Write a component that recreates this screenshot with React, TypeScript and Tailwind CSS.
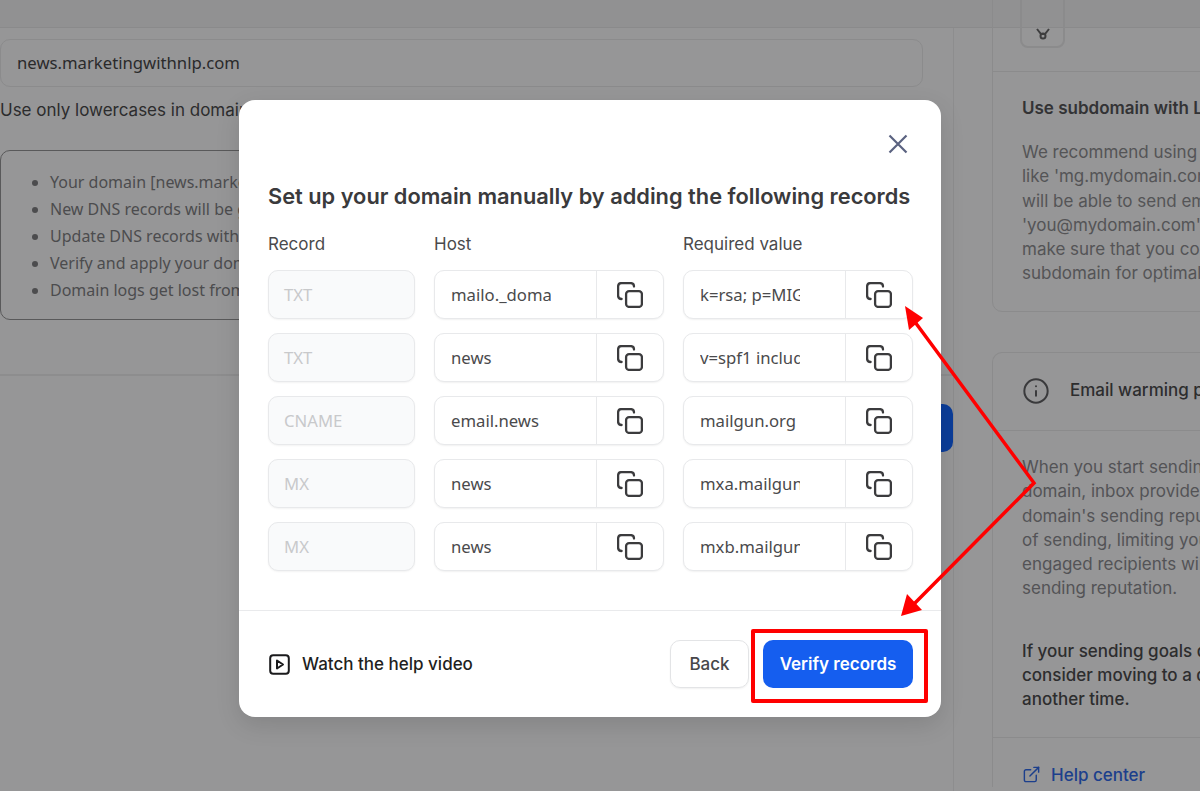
import { ReactNode } from "react"
import { Info, ExternalLink } from "lucide-react"

interface DnsRecord {
  type: string
  host: string
  value: string
}

const records: DnsRecord[] = [
  { type: "TXT", host: "mailo._domainkey.news", value: "k=rsa; p=MIGfMA0GCSq" },
  { type: "TXT", host: "news", value: "v=spf1 include:mailgun.org" },
  { type: "CNAME", host: "email.news", value: "mailgun.org" },
  { type: "MX", host: "news", value: "mxa.mailgun.org" },
  { type: "MX", host: "news", value: "mxb.mailgun.org" },
]

const notes = [
  "Your domain [news.marketingwithnlp.com] will be connected",
  "New DNS records will be generated for this domain",
  "Update DNS records with your domain provider",
  "Verify and apply your domain settings",
  "Domain logs get lost from the previous setup",
]

function CopyIcon() {
  return (
    <svg width="26" height="26" viewBox="0 0 26 26" fill="none" stroke="#3b3b3d" strokeWidth="2.3" strokeLinecap="round" strokeLinejoin="round">
      <rect x="9.1" y="9.1" width="15.8" height="15.8" rx="3" />
      <path d="M4.6 17 C2.6 17 1.1 15.6 1.1 13.6 V4.6 C1.1 2.6 2.6 1.1 4.6 1.1 H13.6 C15.6 1.1 17 2.6 17 4.6" />
    </svg>
  )
}

function CopyField({ text }: { text: string }) {
  return (
    <div className="flex h-[49px] w-[230px] rounded-[10px] border border-[#e8e9eb] bg-white shadow-[0_1px_2px_rgba(0,0,0,0.06)]">
      <div className="flex min-w-0 flex-1 items-center pl-4 pr-[45px]">
        <span className="block w-full overflow-hidden whitespace-nowrap font-['Noto_Sans',sans-serif] text-[16.7px] text-[#4a4a4c]">{text}</span>
      </div>
      <div className="flex w-[67px] shrink-0 items-center justify-center border-l border-[#e8e9eb] pr-[1px]">
        <CopyIcon />
      </div>
    </div>
  )
}

function SideLine({ children }: { children: ReactNode }) {
  return <p className="h-[24.3px] whitespace-nowrap leading-[24.3px]">{children}</p>
}

function Background() {
  return (
    <div className="flex h-full w-full flex-col overflow-hidden bg-[#969697] text-[17px] text-[#2c2c2d]">
      <div className="h-[28px] shrink-0 border-b border-[#8a8a8b] bg-[#919192]" />
      <div className="flex min-h-0 flex-1">
        {/* left column */}
        <div className="relative w-[954px] shrink-0 border-r border-[#8d8d8e]">
          <div className="h-[348px] border-b-2 border-[#8d8d8e] pr-[30px] pt-[11px]">
            <div className="flex h-[48px] items-center rounded-[10px] border border-[#8b8b8c] pl-[16px] font-['Noto_Sans',sans-serif] text-[16.7px] text-[#2a2a2b]">
              news.marketingwithnlp.com
            </div>
            <p className="mt-[11px] whitespace-nowrap leading-[24px]">Use only lowercases in domain name</p>
            <div className="mt-[28px] h-[170px] rounded-[10px] border border-[#59595a] pl-[24px] pt-[18px]">
              <ul className="list-disc pl-[25px] font-['Noto_Sans',sans-serif] text-[16px] text-[#4c4c4e]">
                {notes.map((note) => (
                  <li key={note} className="h-[27px] whitespace-nowrap leading-[27px]">
                    {note}
                  </li>
                ))}
              </ul>
            </div>
          </div>
          <div className="ml-auto mt-[28px] h-[48px] w-[120px] rounded-[10px] bg-[#0b3d99]" />
        </div>

        {/* right column */}
        <div className="ml-[38px] flex w-[260px] shrink-0 flex-col">
          <div className="-mt-[40px] h-[324px] rounded-[10px] border border-[#8b8b8c]">
            <div className="h-[83px] border-b border-[#8b8b8c] pl-[27px]">
              <div className="flex h-[59px] w-[45px] items-end justify-center rounded-[8px] border-2 border-[#8b8b8c] pb-[6px]">
                <svg width="16" height="12" viewBox="0 0 16 12" fill="none" stroke="#3d3d3e" strokeWidth="2">
                  <path d="M2 1 L6 6 H10 L14 1" />
                  <circle cx="8" cy="8" r="2.5" />
                </svg>
              </div>
            </div>
            <div className="pl-[29px] pt-[24px]">
              <p className="whitespace-nowrap font-semibold leading-[24px] text-[#333335]">Use subdomain with LeadConnector</p>
              <div className="mt-[20px] text-[#545456]">
                <SideLine>We recommend using a subdomain</SideLine>
                <SideLine>like 'mg.mydomain.com'. You</SideLine>
                <SideLine>will be able to send emails from</SideLine>
                <SideLine>'you@mydomain.com' but</SideLine>
                <SideLine>make sure that you consider a</SideLine>
                <SideLine>subdomain for optimal delivery</SideLine>
              </div>
            </div>
          </div>

          <div className="mt-[40px] rounded-t-[10px] border border-b-0 border-[#8b8b8c]">
            <div className="flex h-[78px] items-center gap-[20px] border-b border-[#8b8b8c] pb-[2px] pl-[29px]">
              <Info className="size-[28px] shrink-0 text-[#3a3a3c]" strokeWidth={1.7} />
              <span className="whitespace-nowrap font-medium text-[#2d2d2e]">Email warming process</span>
            </div>
            <div className="pl-[29px] pt-[24px]">
              <div className="text-[#535356]">
                <SideLine>When you start sending from a new</SideLine>
                <SideLine>domain, inbox providers monitor</SideLine>
                <SideLine>domain's sending reputation</SideLine>
                <SideLine>of sending, limiting your volume</SideLine>
                <SideLine>engaged recipients will build</SideLine>
                <SideLine>sending reputation.</SideLine>
              </div>
              <div className="mt-[38px] font-medium text-[#2d2d2e]">
                <SideLine>If your sending goals differ</SideLine>
                <SideLine>consider moving to a dedicated</SideLine>
                <SideLine>another time.</SideLine>
              </div>
            </div>
            <div className="mt-[25px] flex items-center gap-[10px] border-t border-[#8b8b8c] pl-[29px] pt-[25px] text-[#1c3f8c]">
              <ExternalLink className="size-[19px]" strokeWidth={1.8} />
              <span className="font-medium leading-[24px]">Help center</span>
            </div>
          </div>
        </div>
      </div>
    </div>
  )
}

function Modal() {
  return (
    <div className="absolute left-[239px] top-[100px] flex h-[617px] w-[702px] flex-col rounded-[16px] bg-white text-[17px] shadow-[0_8px_24px_rgba(0,0,0,0.12)]">
      <div className="flex h-[88px] shrink-0 items-end justify-end pb-[34px] pr-[33px]">
        <svg width="20" height="20" viewBox="0 0 20 20" fill="none" stroke="#5a6280" strokeWidth="2.2">
          <path d="M1.5 1.5 L18.5 18.5 M18.5 1.5 L1.5 18.5" />
        </svg>
      </div>
      <div className="flex-1 pl-[29px]">
        <h2 className="whitespace-nowrap text-[21.8px] font-semibold leading-[16px] text-[#3a3a3c]">
          Set up your domain manually by adding the following records
        </h2>
        <div className="mt-[28px] grid grid-cols-[147px_230px_230px] gap-x-[19px] text-[#4a4a4c]">
          <span className="h-[26px] leading-[24px]">Record</span>
          <span className="leading-[24px]">Host</span>
          <span className="leading-[24px]">Required value</span>
        </div>
        <div className="mt-[12px] flex flex-col gap-[14px]">
          {records.map((record, index) => (
            <div key={index} className="grid grid-cols-[147px_230px_230px] gap-x-[19px]">
              <div className="flex h-[49px] items-center rounded-[10px] border border-[#e8e9eb] bg-[#f9fafb] pl-[15px] font-['Noto_Sans',sans-serif] text-[16.7px] text-[#c8c9cb] shadow-[0_1px_2px_rgba(0,0,0,0.05)]">
                {record.type}
              </div>
              <CopyField text={record.host} />
              <CopyField text={record.value} />
            </div>
          ))}
        </div>
      </div>
      <div className="flex h-[107px] shrink-0 items-center justify-between border-t border-[#e9eaec] pl-[30px] pr-[28px]">
        <div className="flex items-center gap-[12px] font-medium text-[#1f1f21]">
          <svg width="21" height="21" viewBox="0 0 21 21" fill="none" stroke="#1a1a1c" strokeWidth="2" strokeLinejoin="round">
            <rect x="1.2" y="1.2" width="18.6" height="18.6" rx="3" />
            <path d="M8 6.5 L14 10.5 L8 14.5 Z" />
          </svg>
          <span className="pt-[1px]">Watch the help video</span>
        </div>
        <div className="flex items-center gap-[14px]">
          <div className="flex h-[48px] w-[79px] items-center justify-center rounded-[10px] border border-[#e3e4e6] pt-[1px] font-medium text-[#47474a] shadow-[0_1px_2px_rgba(0,0,0,0.06)]">
            Back
          </div>
          <div className="flex h-[48px] w-[150px] items-center justify-center rounded-[10px] bg-[#155eef] pt-[1px] font-semibold text-white">
            Verify records
          </div>
        </div>
      </div>
    </div>
  )
}

export default function App() {
  return (
    <div className="relative h-[791px] w-[1200px] overflow-hidden font-['Inter',sans-serif] text-base">
      <Background />
      <Modal />

      {/* annotation drawn over the screenshot */}
      <div className="absolute left-[751px] top-[629px] h-[74px] w-[177px] rounded-[2px] border-4 border-[#ff0000]" />
      <svg className="absolute left-0 top-0" width="1200" height="791" fill="none">
        <path d="M915 322 L1034 483 L914 604" stroke="#ff0000" strokeWidth="3.5" />
        <path d="M905 306 L923 318 L909 330 Z" fill="#ff0000" />
        <path d="M901 616 L907 594 L922 610 Z" fill="#ff0000" />
      </svg>
    </div>
  )
}
